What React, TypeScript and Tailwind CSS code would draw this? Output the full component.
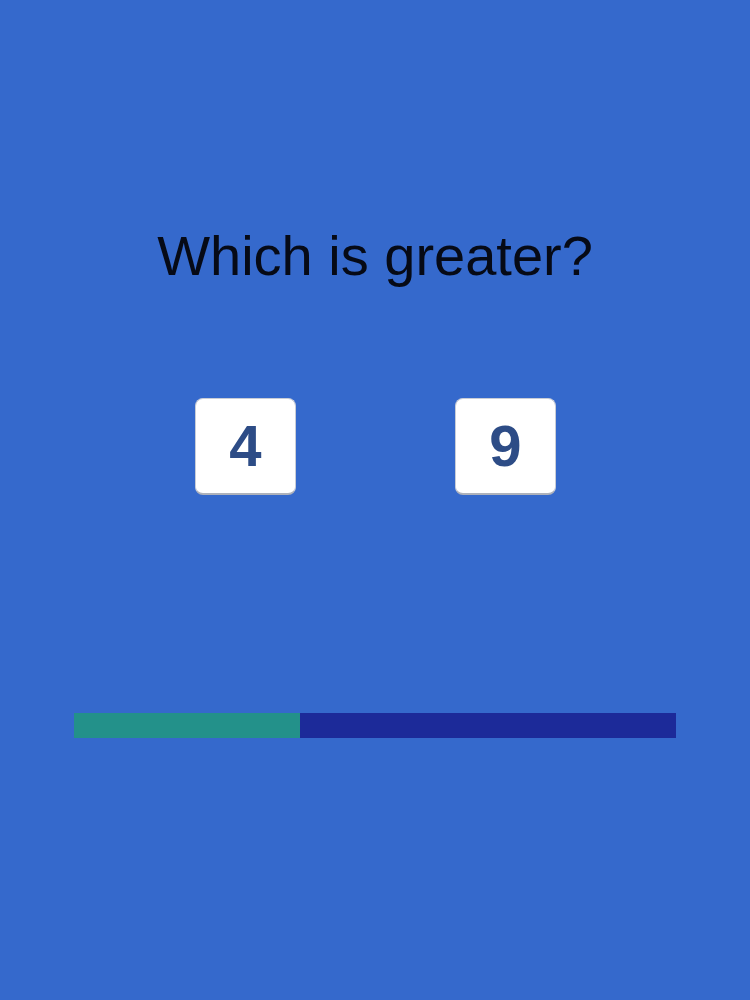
export default function App() {
  const progress = 226 / 602;
  return (
    <div
      className="w-[750px] h-[1000px] bg-[#3569cc] flex flex-col items-center"
      style={{ fontFamily: '"Liberation Sans", Arial, sans-serif' }}
    >
      <h1 className="mt-[228px] text-[56px] leading-none text-[#060a16] font-normal">
        Which is greater?
      </h1>
      <div className="mt-[114px] flex gap-[159px] ml-[1px]">
        <div className="w-[101px] h-[97px] bg-white rounded-[8px] border border-[#c9cdd6] border-b-2 border-b-[#aeb2bb] flex items-center justify-center">
          <span className="text-[58px] font-bold leading-none text-[#2d4c86]">4</span>
        </div>
        <div className="w-[101px] h-[97px] bg-white rounded-[8px] border border-[#c9cdd6] border-b-2 border-b-[#aeb2bb] flex items-center justify-center">
          <span className="text-[58px] font-bold leading-none text-[#2d4c86]">9</span>
        </div>
      </div>
      <div className="mt-[218px] w-[602px] h-[25px] bg-[#1c2a99] flex">
        <div className="h-full bg-[#23918a]" style={{ width: `${progress * 100}%` }} />
      </div>
    </div>
  );
}
